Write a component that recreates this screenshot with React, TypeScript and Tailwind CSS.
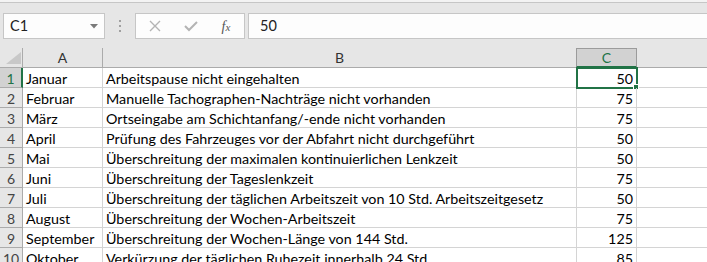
import React from "react";

const rows: [string, string, string][] = [
  ["Januar", "Arbeitspause nicht eingehalten", "50"],
  ["Februar", "Manuelle Tachographen-Nachträge nicht vorhanden", "75"],
  ["März", "Ortseingabe am Schichtanfang/-ende nicht vorhanden", "75"],
  ["April", "Prüfung des Fahrzeuges vor der Abfahrt nicht durchgeführt", "50"],
  ["Mai", "Überschreitung der maximalen kontinuierlichen Lenkzeit", "50"],
  ["Juni", "Überschreitung der Tageslenkzeit", "75"],
  ["Juli", "Überschreitung der täglichen Arbeitszeit von 10 Std. Arbeitszeitgesetz", "50"],
  ["August", "Überschreitung der Wochen-Arbeitszeit", "75"],
  ["September", "Überschreitung der Wochen-Länge von 144 Std.", "125"],
  ["Oktober", "Verkürzung der täglichen Ruhezeit innerhalb 24 Std.", "85"],
];

const font = { fontFamily: "Lato, 'Open Sans', sans-serif" };

export default function App() {
  return (
    <div
      className="w-[707px] h-[262px] overflow-hidden bg-[#e6e6e6] text-[14.3px] text-black"
      style={font}
    >
      {/* top strip */}
      <div className="h-[2px] bg-[#f3f3f3]" />
      <div className="h-[1px] bg-[#c6c6c6]" />
      {/* formula bar */}
      <div className="h-[45px] pt-[10px] flex items-start">
        <div className="ml-[3px] w-[102px] h-[26px] bg-[#fdfdfd] border border-[#c6c6c6] flex items-center pl-[6px] pr-[6px]">
          <span className="flex-1 text-[14.5px] text-[#222]">C1</span>
          <svg width="8" height="5" viewBox="0 0 8 5">
            <path d="M0 0 H8 L4 4.5 Z" fill="#7a7a7a" />
          </svg>
        </div>
        <div className="w-[30px] h-[26px] flex flex-col items-center justify-center gap-[3px]">
          <div className="w-[2px] h-[2px] bg-[#a0a0a0]" />
          <div className="w-[2px] h-[2px] bg-[#a0a0a0]" />
          <div className="w-[2px] h-[2px] bg-[#a0a0a0]" />
        </div>
        <div className="w-[110px] h-[26px] bg-[#fdfdfd] border border-[#c6c6c6] flex items-center">
          <div className="w-[38px] flex justify-center">
            <svg width="12" height="12" viewBox="0 0 12 12">
              <path d="M1 1 L11 11 M11 1 L1 11" stroke="#b4b4b4" strokeWidth="1.4" fill="none" />
            </svg>
          </div>
          <div className="w-[34px] flex justify-center">
            <svg width="14" height="12" viewBox="0 0 14 12">
              <path d="M1 6 L5 10 L13 2" stroke="#b4b4b4" strokeWidth="2" fill="none" />
            </svg>
          </div>
          <div className="w-[36px] flex justify-center">
            <span
              className="italic text-[14px] text-[#555]"
              style={{ fontFamily: "'Liberation Serif', serif" }}
            >
              f<span className="text-[11px]">x</span>
            </span>
          </div>
        </div>
        <div className="ml-[3px] flex-1 h-[26px] bg-[#fdfdfd] border border-[#c6c6c6] border-r-0 flex items-center pl-[11px] text-[14.5px] text-[#222]">
          50
        </div>
      </div>
      {/* sheet */}
      <div className="grid grid-cols-[23px_80px_474px_60px_1fr] bg-white">
        {/* header row */}
        <div className="h-[20px] bg-[#e6e6e6] border-r border-b border-[#ababab] relative flex items-end justify-end pr-[1px] pb-[3px]">
          <svg width="15" height="12" viewBox="0 0 15 12">
            <path d="M15 0 V12 H0 Z" fill="#c8c8c8" />
          </svg>
        </div>
        <div className="h-[20px] bg-[#e6e6e6] border-r border-b border-[#ababab] flex items-center justify-center text-[14px] text-[#333]">
          A
        </div>
        <div className="h-[20px] bg-[#e6e6e6] border-r border-b border-[#ababab] flex items-center justify-center text-[14px] text-[#333]">
          B
        </div>
        <div className="h-[20px] bg-[#d2d2d2] border-r border-l border-t border-[#9b9b9b] border-b-2 border-b-[#217346] -ml-[1px] flex items-center justify-center text-[14px] text-[#217346]">
          C
        </div>
        <div className="h-[20px] bg-[#e6e6e6] border-b border-[#ababab]" />
        {rows.map((r, i) => {
          const sel = i === 0;
          return (
            <React.Fragment key={i}>
              <div
                className={
                  sel
                    ? "h-[20px] pt-[1px] bg-[#d2d2d2] border-r-2 border-r-[#217346] border-b border-b-[#ababab] flex items-center justify-center text-[14px] text-[#217346]"
                    : "h-[20px] pt-[1px] bg-[#e6e6e6] border-r border-b border-[#ababab] flex items-center justify-center text-[14px] text-[#444]"
                }
              >
                {i + 1}
              </div>
              <div className="h-[20px] pt-[2px] border-r border-b border-[#d4d4d4] flex items-center pl-[3px] whitespace-nowrap overflow-hidden">
                {r[0]}
              </div>
              <div className="h-[20px] pt-[2px] border-r border-b border-[#d4d4d4] flex items-center pl-[3px] whitespace-nowrap overflow-hidden">
                {r[1]}
              </div>
              <div className="h-[20px] pt-[2px] border-r border-b border-[#d4d4d4] flex items-center justify-end pr-[3px] relative">
                {r[2]}
                {sel && (
                  <>
                    <div className="absolute -left-[1px] -top-[1px] w-[62px] h-[22px] border-2 border-[#217346]" />
                    <div className="absolute -right-[3px] -bottom-[3px] w-[6px] h-[6px] bg-[#217346] border border-white" />
                  </>
                )}
              </div>
              <div className="h-[20px] border-b border-[#d4d4d4]" />
            </React.Fragment>
          );
        })}
      </div>
    </div>
  );
}
